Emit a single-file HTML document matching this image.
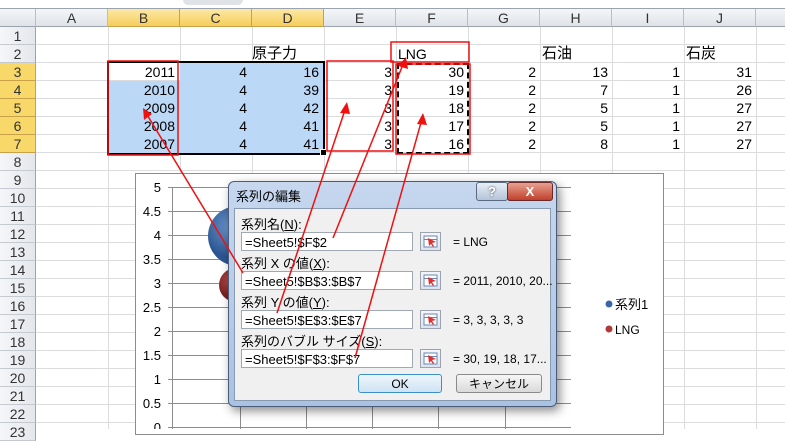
<!DOCTYPE html>
<html><head><meta charset="utf-8"><style>
body{margin:0;width:785px;height:429px;overflow:hidden;background:#fff;font-family:"Liberation Sans","Noto Sans CJK JP",sans-serif;position:relative}
.a{position:absolute}
.ch{position:absolute;top:9px;height:17px;background:linear-gradient(#f4f6f9,#dfe3e8);border-right:1px solid #b8bfc9;border-bottom:1px solid #9aa3ae;font-size:14px;text-align:center;line-height:18px;color:#333}
.ch.s{background:linear-gradient(#fbe9a5,#f6cd5b);border-color:#c8a248}
.rh{position:absolute;left:0;width:35px;height:17px;background:linear-gradient(90deg,#f4f6f9,#e4e7ec);border-right:1px solid #9aa3ae;border-bottom:1px solid #c5cad1;font-size:14px;text-align:center;line-height:18px;color:#333}
.rh.s{background:#f8d868;border-color:#c8a248}
.c{position:absolute;font-size:14px;text-align:right;line-height:18px;height:18px;color:#000}
.in{position:absolute;left:241px;width:172px;height:19px;background:#fff;border:1px solid #a0a8b4;font-size:13px;line-height:19px;padding-left:3px;box-sizing:border-box}
.ib{position:absolute;left:420px;width:21px;height:19px;border:1px solid #9aa3ae;background:linear-gradient(#f4f6fa,#dde4ee);box-sizing:border-box}
.lb{position:absolute;left:241px;font-size:13px}
.vv{position:absolute;left:453px;font-size:12px}
</style></head><body>
<div class="a" style="left:0;top:0;width:785px;height:8px;background:#fff;border-bottom:1px solid #9aa3ae"></div>
<div class="a" style="left:183px;top:0;width:60px;height:5px;background:#dfe3e8;border-radius:0 0 6px 6px"></div>
<svg class="a" style="left:0;top:0" width="785" height="429">
<g stroke="#dadcdf" stroke-width="1">
<line x1="108.5" y1="27" x2="108.5" y2="429"/><line x1="180.5" y1="27" x2="180.5" y2="429"/><line x1="252.5" y1="27" x2="252.5" y2="429"/><line x1="324.5" y1="27" x2="324.5" y2="429"/><line x1="396.5" y1="27" x2="396.5" y2="429"/><line x1="468.5" y1="27" x2="468.5" y2="429"/><line x1="540.5" y1="27" x2="540.5" y2="429"/><line x1="612.5" y1="27" x2="612.5" y2="429"/><line x1="684.5" y1="27" x2="684.5" y2="429"/><line x1="756.5" y1="27" x2="756.5" y2="429"/>
<line x1="36" y1="44.5" x2="785" y2="44.5"/><line x1="36" y1="62.5" x2="785" y2="62.5"/><line x1="36" y1="80.5" x2="785" y2="80.5"/><line x1="36" y1="98.5" x2="785" y2="98.5"/><line x1="36" y1="116.5" x2="785" y2="116.5"/><line x1="36" y1="134.5" x2="785" y2="134.5"/><line x1="36" y1="152.5" x2="785" y2="152.5"/><line x1="36" y1="170.5" x2="785" y2="170.5"/><line x1="36" y1="188.5" x2="785" y2="188.5"/><line x1="36" y1="206.5" x2="785" y2="206.5"/><line x1="36" y1="224.5" x2="785" y2="224.5"/><line x1="36" y1="242.5" x2="785" y2="242.5"/><line x1="36" y1="260.5" x2="785" y2="260.5"/><line x1="36" y1="278.5" x2="785" y2="278.5"/><line x1="36" y1="296.5" x2="785" y2="296.5"/><line x1="36" y1="314.5" x2="785" y2="314.5"/><line x1="36" y1="332.5" x2="785" y2="332.5"/><line x1="36" y1="350.5" x2="785" y2="350.5"/><line x1="36" y1="368.5" x2="785" y2="368.5"/><line x1="36" y1="386.5" x2="785" y2="386.5"/><line x1="36" y1="404.5" x2="785" y2="404.5"/><line x1="36" y1="422.5" x2="785" y2="422.5"/>
</g></svg>
<div class="ch" style="left:0;width:35px"></div>
<div class="ch" style="left:36px;width:71px">A</div><div class="ch s" style="left:108px;width:71px">B</div><div class="ch s" style="left:180px;width:71px">C</div><div class="ch s" style="left:252px;width:71px">D</div><div class="ch" style="left:324px;width:71px">E</div><div class="ch" style="left:396px;width:71px">F</div><div class="ch" style="left:468px;width:71px">G</div><div class="ch" style="left:540px;width:71px">H</div><div class="ch" style="left:612px;width:71px">I</div><div class="ch" style="left:684px;width:71px">J</div><div class="ch" style="left:756px;width:29px"></div>
<div class="rh" style="top:27px">1</div><div class="rh" style="top:45px">2</div><div class="rh s" style="top:63px">3</div><div class="rh s" style="top:81px">4</div><div class="rh s" style="top:99px">5</div><div class="rh s" style="top:117px">6</div><div class="rh s" style="top:135px">7</div><div class="rh" style="top:153px">8</div><div class="rh" style="top:171px">9</div><div class="rh" style="top:189px">10</div><div class="rh" style="top:207px">11</div><div class="rh" style="top:225px">12</div><div class="rh" style="top:243px">13</div><div class="rh" style="top:261px">14</div><div class="rh" style="top:279px">15</div><div class="rh" style="top:297px">16</div><div class="rh" style="top:315px">17</div><div class="rh" style="top:333px">18</div><div class="rh" style="top:351px">19</div><div class="rh" style="top:369px">20</div><div class="rh" style="top:387px">21</div><div class="rh" style="top:405px">22</div><div class="rh" style="top:423px">23</div>
<div class="a" style="left:180px;top:63px;width:144px;height:18px;background:#bcd8f7"></div>
<div class="a" style="left:108px;top:81px;width:216px;height:72px;background:#bcd8f7"></div>
<div class="a" style="left:107px;top:61px;width:214px;height:90px;border:2px solid #000"></div>
<div class="a" style="left:320px;top:149px;width:5px;height:5px;background:#000;border:1px solid #fff"></div>
<div class="c" style="left:252px;top:45px;width:72px;text-align:left;font-size:15px">原子力</div>
<div class="c" style="left:398px;top:45px;width:70px;text-align:left">LNG</div>
<div class="c" style="left:542px;top:45px;width:70px;text-align:left;font-size:15px">石油</div>
<div class="c" style="left:686px;top:45px;width:70px;text-align:left;font-size:15px">石炭</div>
<div class="a" style="top:63px;left:0;width:785px">
<div style="position:relative;font-size:14px;line-height:18px">
<div class="c" style="left:108px;top:0;width:67px">2011<br>2010<br>2009<br>2008<br>2007</div>
<div class="c" style="left:180px;top:0;width:67px">4<br>4<br>4<br>4<br>4</div>
<div class="c" style="left:252px;top:0;width:67px">16<br>39<br>42<br>41<br>41</div>
<div class="c" style="left:324px;top:0;width:68px">3<br>3<br>3<br>3<br>3</div>
<div class="c" style="left:396px;top:0;width:68px">30<br>19<br>18<br>17<br>16</div>
<div class="c" style="left:468px;top:0;width:68px">2<br>2<br>2<br>2<br>2</div>
<div class="c" style="left:540px;top:0;width:68px">13<br>7<br>5<br>5<br>8</div>
<div class="c" style="left:612px;top:0;width:68px">1<br>1<br>1<br>1<br>1</div>
<div class="c" style="left:684px;top:0;width:68px">31<br>26<br>27<br>27<br>27</div>
</div></div>
<div class="a" style="left:397px;top:63px;width:68px;height:87px;border:2px dashed #000"></div>
<div class="a" style="left:135px;top:173px;width:527px;height:260px;border:1px solid #8c8c8c;background:#fff"></div>
<svg class="a" style="left:0;top:0" width="785" height="429">
<g stroke="#8c8c8c"><line x1="168" y1="187.5" x2="571" y2="187.5"/><line x1="168" y1="211.5" x2="571" y2="211.5"/><line x1="168" y1="235.5" x2="571" y2="235.5"/><line x1="168" y1="259.5" x2="571" y2="259.5"/><line x1="168" y1="283.5" x2="571" y2="283.5"/><line x1="168" y1="307.5" x2="571" y2="307.5"/><line x1="168" y1="331.5" x2="571" y2="331.5"/><line x1="168" y1="355.5" x2="571" y2="355.5"/><line x1="168" y1="379.5" x2="571" y2="379.5"/><line x1="168" y1="403.5" x2="571" y2="403.5"/><line x1="168" y1="427.5" x2="571" y2="427.5"/><line x1="172.5" y1="187" x2="172.5" y2="429"/>
<line x1="240.5" y1="187" x2="240.5" y2="429"/><line x1="306.5" y1="187" x2="306.5" y2="429"/><line x1="372.5" y1="187" x2="372.5" y2="429"/><line x1="438.5" y1="187" x2="438.5" y2="429"/><line x1="505.5" y1="187" x2="505.5" y2="429"/></g>
<g font-size="13" text-anchor="end" fill="#000" font-family="Liberation Sans"><text x="161" y="192">5</text><text x="161" y="216">4.5</text><text x="161" y="240">4</text><text x="161" y="264">3.5</text><text x="161" y="288">3</text><text x="161" y="312">2.5</text><text x="161" y="336">2</text><text x="161" y="360">1.5</text><text x="161" y="384">1</text><text x="161" y="408">0.5</text><text x="161" y="432">0</text></g>
<defs><radialGradient id="bl" cx="0.4" cy="0.35"><stop offset="0" stop-color="#6f99d0"/><stop offset="1" stop-color="#2b5590"/></radialGradient><radialGradient id="rd" cx="0.4" cy="0.35"><stop offset="0" stop-color="#c05050"/><stop offset="1" stop-color="#7a2020"/></radialGradient></defs>
<circle cx="238" cy="236" r="30" fill="url(#bl)"/><circle cx="236" cy="285" r="17" fill="url(#rd)"/>
<circle cx="609" cy="304" r="3.5" fill="#3a66a8"/><circle cx="609" cy="329" r="3.5" fill="#b03a3a"/>
<text x="615" y="309" font-size="13" font-family="Liberation Sans,Noto Sans CJK JP">系列1</text><text x="615" y="334" font-size="12" font-family="Liberation Sans">LNG</text>
</svg>
<div class="a" style="left:228px;top:181px;width:329px;height:226px;border-radius:6px;background:linear-gradient(#c6d7ee,#a9c2e3);border:1px solid #4a5c78;box-sizing:border-box;box-shadow:3px 4px 10px rgba(0,0,0,.45)"></div>
<div class="a" style="left:236px;top:186px;font-size:13px">系列の編集</div>
<div class="a" style="left:476px;top:182px;width:30px;height:17px;border:1px solid #5a6a80;border-radius:3px;background:linear-gradient(#e8eef6,#b4c4d8);font-size:13px;text-align:center;line-height:17px;font-weight:bold;color:#fff;text-shadow:0 0 2px #334">?</div>
<div class="a" style="left:507px;top:182px;width:44px;height:17px;border:1px solid #6a2a2a;border-radius:3px;background:linear-gradient(#e8a090,#c0402c);font-size:13px;text-align:center;line-height:17px;font-weight:bold;color:#fff">X</div>
<div class="a" style="left:234px;top:208px;width:317px;height:193px;background:#f0f0f0;border:1px solid #8a9ab0;box-sizing:border-box"></div>
<div class="lb" style="top:214px">系列名(<u>N</u>):</div>
<div class="in" style="top:232px">=Sheet5!$F$2</div><div class="ib" style="top:232px"></div><div class="vv" style="top:235px">= LNG</div>
<div class="lb" style="top:253px">系列 X の値(<u>X</u>):</div>
<div class="in" style="top:271px">=Sheet5!$B$3:$B$7</div><div class="ib" style="top:271px"></div><div class="vv" style="top:274px">= 2011, 2010, 20...</div>
<div class="lb" style="top:292px">系列 Y の値(<u>Y</u>):</div>
<div class="in" style="top:310px">=Sheet5!$E$3:$E$7</div><div class="ib" style="top:310px"></div><div class="vv" style="top:313px">= 3, 3, 3, 3, 3</div>
<div class="lb" style="top:331px">系列のバブル サイズ(<u>S</u>):</div>
<div class="in" style="top:349px">=Sheet5!$F$3:$F$7</div><div class="ib" style="top:349px"></div><div class="vv" style="top:352px">= 30, 19, 18, 17...</div>
<div class="a" style="left:358px;top:374px;width:84px;height:19px;border:1px solid #3c8fc8;border-radius:3px;background:linear-gradient(#eef6fc,#cfe3f3);font-size:12px;text-align:center;line-height:19px;box-sizing:border-box">OK</div>
<div class="a" style="left:456px;top:374px;width:86px;height:19px;border:1px solid #8a8a8a;border-radius:3px;background:linear-gradient(#f6f6f6,#dadada);font-size:12px;text-align:center;line-height:19px;box-sizing:border-box">キャンセル</div>
<svg class="a" style="left:0;top:0" width="785" height="429">
<g fill="none" stroke="#f01010" stroke-width="1.5">
<rect x="108" y="61" width="70" height="94"/><rect x="327" y="61" width="66" height="90"/><rect x="391" y="42" width="78" height="20"/><rect x="396" y="64" width="74" height="90"/>
<line x1="243" y1="273" x2="146" y2="113"/><line x1="277" y1="313" x2="346" y2="107"/><line x1="333" y1="238" x2="404" y2="62"/><line x1="355" y1="358" x2="422" y2="119"/>
</g>
<g fill="#f01010"><polygon points="143,108 144,120 152,114"/><polygon points="347,102 340,113 350,114"/><polygon points="406,57 398,66 408,69"/><polygon points="423,113 417,124 427,125"/></g>
</svg>
<svg class="a" style="left:0;top:0" width="785" height="429">
<g><rect x="424" y="236" width="13" height="11" fill="#fff" stroke="#6a86b4"/><line x1="424" y1="239.5" x2="437" y2="239.5" stroke="#6a86b4"/><polygon points="428,238 436,242 432,243 434,246 433,247 431,244 429,246" fill="#e03030"/></g>
<g><rect x="424" y="275" width="13" height="11" fill="#fff" stroke="#6a86b4"/><line x1="424" y1="278.5" x2="437" y2="278.5" stroke="#6a86b4"/><polygon points="428,277 436,281 432,282 434,285 433,286 431,283 429,285" fill="#e03030"/></g>
<g><rect x="424" y="314" width="13" height="11" fill="#fff" stroke="#6a86b4"/><line x1="424" y1="317.5" x2="437" y2="317.5" stroke="#6a86b4"/><polygon points="428,316 436,320 432,321 434,324 433,325 431,322 429,324" fill="#e03030"/></g>
<g><rect x="424" y="353" width="13" height="11" fill="#fff" stroke="#6a86b4"/><line x1="424" y1="356.5" x2="437" y2="356.5" stroke="#6a86b4"/><polygon points="428,355 436,359 432,360 434,363 433,364 431,361 429,363" fill="#e03030"/></g>
</svg>
</body></html>
